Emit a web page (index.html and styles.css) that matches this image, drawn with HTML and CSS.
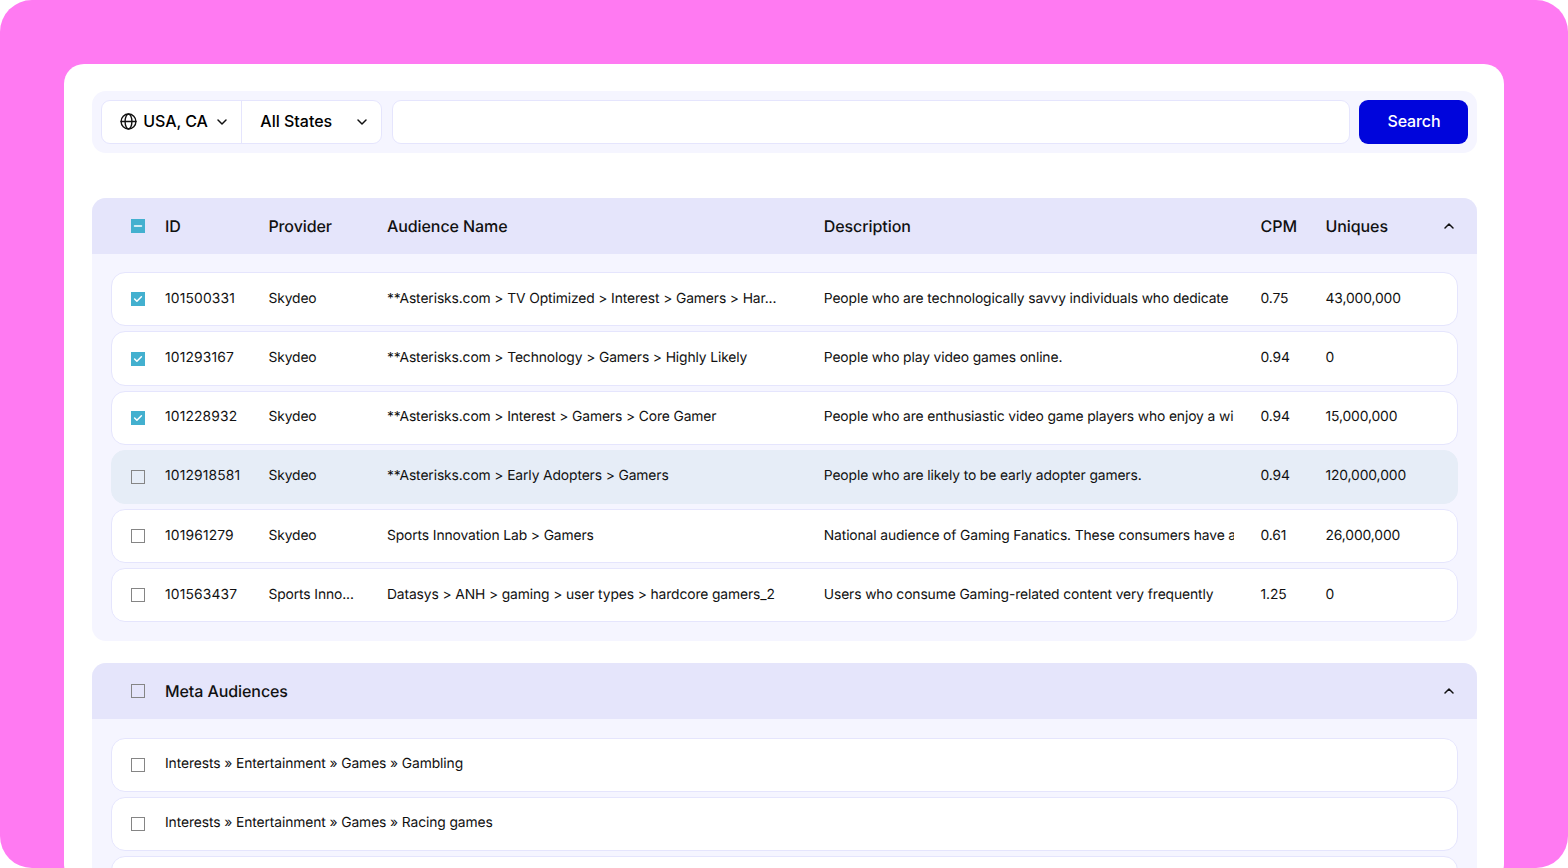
FILE: index.html
```html
<!DOCTYPE html>
<html lang="en">
<head>
    <meta charset="UTF-8">
    <meta name="viewport" content="width=device-width, initial-scale=1.0">
    <title>Audience Search</title>
    <link rel="stylesheet" href="styles.css">
</head>
<body>
    <div class="page">
        <main class="card">
            <form class="search-bar">
                <div class="filters">
                    <button type="button" class="filter country">
                        <svg class="globe" viewBox="0 0 16 16"><circle cx="8" cy="8" r="7"/><ellipse cx="8" cy="8" rx="3.2" ry="7"/><path d="M1 8h14"/></svg>
                        <span>USA, CA</span>
                        <svg class="chevron" viewBox="0 0 12 8"><path d="M2 2L6 6l4-4"/></svg>
                    </button>
                    <button type="button" class="filter states">
                        <span>All States</span>
                        <svg class="chevron" viewBox="0 0 12 8"><path d="M2 2L6 6l4-4"/></svg>
                    </button>
                </div>
                <input type="text" class="search-input" aria-label="Search audiences">
                <button type="submit" class="search-button">Search</button>
            </form>

            <section class="panel">
                <div class="panel-header columns">
                    <span class="checkbox mixed"><svg viewBox="0 0 14 14"><path d="M3.5 7h7"/></svg></span>
                    <span>ID</span>
                    <span>Provider</span>
                    <span>Audience Name</span>
                    <span>Description</span>
                    <span>CPM</span>
                    <span>Uniques</span>
                    <svg class="chevron" viewBox="0 0 12 8"><path d="M2 6l4-4 4 4"/></svg>
                </div>
                <div class="rows">
                    <div class="row columns">
                        <span class="checkbox checked"><svg viewBox="0 0 14 14"><path d="M3.6 7l2.3 2.3 4.5-4.5"/></svg></span>
                        <span class="id">101500331</span>
                        <span class="provider">Skydeo</span>
                        <span class="name">**Asterisks.com &gt; TV Optimized &gt; Interest &gt; Gamers &gt; Har...</span>
                        <span class="description">People who are technologically savvy individuals who dedicate</span>
                        <span>0.75</span>
                        <span>43,000,000</span>
                    </div>
                    <div class="row columns">
                        <span class="checkbox checked"><svg viewBox="0 0 14 14"><path d="M3.6 7l2.3 2.3 4.5-4.5"/></svg></span>
                        <span class="id">101293167</span>
                        <span class="provider">Skydeo</span>
                        <span class="name">**Asterisks.com &gt; Technology &gt; Gamers &gt; Highly Likely</span>
                        <span class="description">People who play video games online.</span>
                        <span>0.94</span>
                        <span>0</span>
                    </div>
                    <div class="row columns">
                        <span class="checkbox checked"><svg viewBox="0 0 14 14"><path d="M3.6 7l2.3 2.3 4.5-4.5"/></svg></span>
                        <span class="id">101228932</span>
                        <span class="provider">Skydeo</span>
                        <span class="name">**Asterisks.com &gt; Interest &gt; Gamers &gt; Core Gamer</span>
                        <span class="description">People who are enthusiastic video game players who enjoy a wi</span>
                        <span>0.94</span>
                        <span>15,000,000</span>
                    </div>
                    <div class="row columns active">
                        <span class="checkbox"></span>
                        <span class="id">1012918581</span>
                        <span class="provider">Skydeo</span>
                        <span class="name">**Asterisks.com &gt; Early Adopters &gt; Gamers</span>
                        <span class="description">People who are likely to be early adopter gamers.</span>
                        <span>0.94</span>
                        <span>120,000,000</span>
                    </div>
                    <div class="row columns">
                        <span class="checkbox"></span>
                        <span class="id">101961279</span>
                        <span class="provider">Skydeo</span>
                        <span class="name">Sports Innovation Lab &gt; Gamers</span>
                        <span class="description">National audience of Gaming Fanatics. These consumers have a</span>
                        <span>0.61</span>
                        <span>26,000,000</span>
                    </div>
                    <div class="row columns">
                        <span class="checkbox"></span>
                        <span class="id">101563437</span>
                        <span class="provider">Sports Inno...</span>
                        <span class="name">Datasys &gt; ANH &gt; gaming &gt; user types &gt; hardcore gamers_2</span>
                        <span class="description">Users who consume Gaming-related content very frequently</span>
                        <span>1.25</span>
                        <span>0</span>
                    </div>
                </div>
            </section>

            <section class="panel">
                <div class="panel-header meta">
                    <span class="checkbox"></span>
                    <span>Meta Audiences</span>
                    <svg class="chevron" viewBox="0 0 12 8"><path d="M2 6l4-4 4 4"/></svg>
                </div>
                <div class="rows">
                    <div class="row meta">
                        <span class="checkbox"></span>
                        <span>Interests » Entertainment » Games » Gambling</span>
                    </div>
                    <div class="row meta">
                        <span class="checkbox"></span>
                        <span>Interests » Entertainment » Games » Racing games</span>
                    </div>
                    <div class="row meta"></div>
                </div>
            </section>
        </main>
    </div>
</body>
</html>
```

FILE: styles.css
```css
* {
    box-sizing: border-box;
}

body {
    margin: 0;
    background: white;
    color: #111;
    font-family: Inter, sans-serif;
    font-size: 13.85px;
    text-rendering: geometricPrecision;
}

.page {
    height: 100vh;
    padding: 64px 64px 0;
    overflow: hidden;
    background: #ff7af2;
    border-radius: 32px;
}

.card {
    height: 820px;
    padding: 26.7px 27.3px 0 28.3px;
    overflow: hidden;
    background: white;
    border-radius: 20px;
}

svg {
    display: block;
    fill: none;
    stroke: #111;
    stroke-width: 1.5;
    stroke-linecap: round;
    stroke-linejoin: round;
}

/* Search bar */
.search-bar {
    display: flex;
    gap: 9.5px;
    height: 62px;
    margin-bottom: 45px;
    padding: 9px;
    background: #f5f5ff;
    border-radius: 14px;
}

.filters {
    display: flex;
    width: 281px;
    background: white;
    border: 1px solid #e5e5fd;
    border-radius: 9px;
}

.filter {
    display: flex;
    align-items: center;
    padding: 0;
    background: none;
    border: none;
    color: #000;
    font-family: inherit;
    font-size: 16px;
    font-weight: 450;
}

.filter span {
    padding-bottom: 1px;
}

.country {
    width: 140px;
    padding-left: 18px;
    border-right: 1px solid #e5e5fd;
    letter-spacing: -0.1px;
}

.states {
    flex: 1;
    justify-content: space-between;
    padding: 0 13px 0 18px;
}

.globe {
    width: 17px;
    height: 17px;
    margin-right: 6px;
    stroke-width: 1.3;
}

.country .chevron {
    margin-left: 8px;
}

.chevron {
    width: 12px;
    height: 8px;
}

.search-input {
    flex: 1;
    border: 1px solid #e5e5fd;
    border-radius: 9px;
    font: inherit;
}

.search-button {
    width: 108.5px;
    padding: 0 0 1px 1px;
    background: #0005dc;
    border: none;
    border-radius: 9px;
    color: white;
    font-family: inherit;
    font-size: 16px;
    font-weight: 450;
    letter-spacing: -0.1px;
}

/* Audience tables */
.panel {
    margin-bottom: 22.3px;
    overflow: hidden;
    background: #f5f5ff;
    border-radius: 14px;
}

.panel-header {
    height: 56.2px;
    padding: 0 22px 0 38.4px;
    background: #e5e5fb;
    font-size: 16px;
    font-weight: 450;
    letter-spacing: -0.08px;
}

.columns {
    display: grid;
    grid-template-columns: 34.3px 103.4px 118.6px 436.8px 436.8px 64.9px 1fr auto;
    align-items: center;
}

.meta {
    display: flex;
    align-items: center;
}

.meta .checkbox {
    margin-right: 20.3px;
}

.meta .chevron {
    margin-left: auto;
}

.rows {
    display: flex;
    flex-direction: column;
    gap: 5px;
    padding: 18.4px;
}

.row {
    height: 54.2px;
    padding: 0 19px 1px;
    background: white;
    border: 1px solid #e5e5fd;
    border-radius: 14px;
    letter-spacing: -0.11px;
    white-space: nowrap;
}

.row.active {
    background: #e6edf7;
    border-color: #e6edf7;
}

.row .checkbox {
    position: relative;
    top: 0.5px;
}

.id {
    letter-spacing: 0.15px;
}

.name,
.description {
    letter-spacing: -0.12px;
}

.description {
    width: 410.5px;
    overflow: hidden;
}

.checkbox {
    width: 14px;
    height: 14px;
    border: 1.5px solid #858585;
}

.checked,
.mixed {
    background: #43b0cf;
    border: none;
}

.checkbox svg {
    stroke: white;
}
```
